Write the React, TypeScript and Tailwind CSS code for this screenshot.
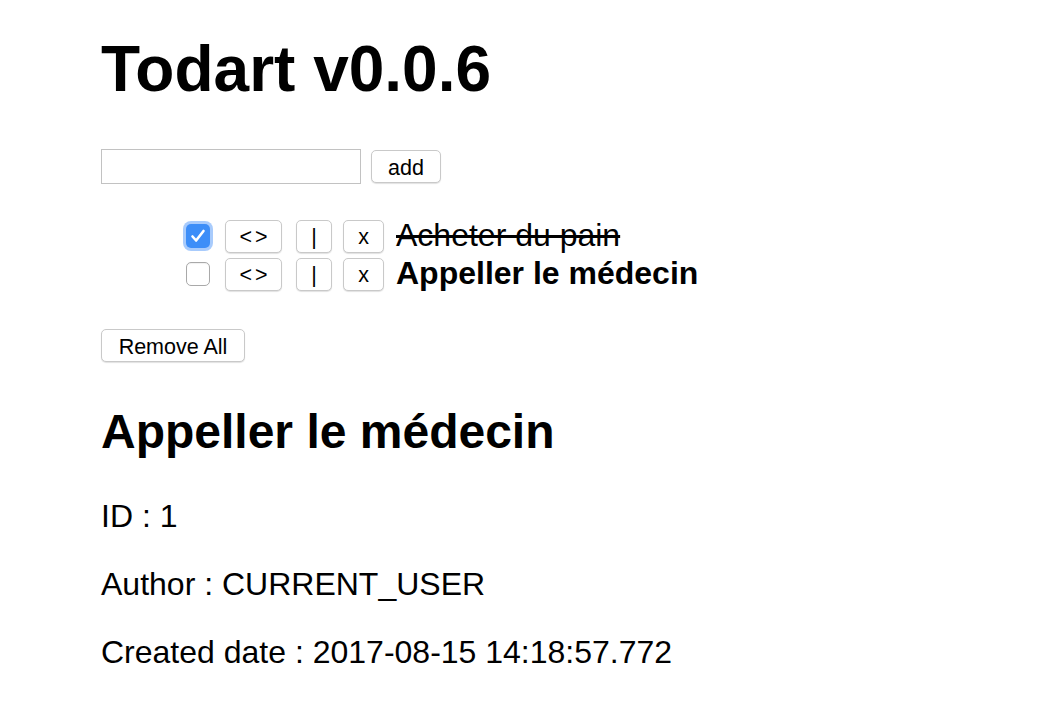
import React from "react";

type Todo = {
  id: number;
  title: string;
  done: boolean;
};

const todos: Todo[] = [
  { id: 0, title: "Acheter du pain", done: true },
  { id: 1, title: "Appeller le médecin", done: false },
];

const btn =
  "h-[33px] rounded-[5px] border border-[#c9c9c9] bg-white pt-[4px] text-[21.5px] leading-none text-black shadow-[0_1px_1px_rgba(0,0,0,0.12)]";

const Checkbox = ({ checked }: { checked: boolean }) =>
  checked ? (
    <span className="flex h-[24px] w-[24px] items-center justify-center rounded-[5px] bg-[#3d8ef8] shadow-[0_0_0_3px_rgba(96,160,250,0.55)]">
      <svg width="18" height="18" viewBox="0 0 18 18" fill="none">
        <path
          d="M3.5 9.5l3.6 4L14.5 4"
          stroke="white"
          strokeWidth="2.6"
          strokeLinecap="round"
          strokeLinejoin="round"
        />
      </svg>
    </span>
  ) : (
    <span className="block h-[24px] w-[24px] rounded-[5px] border border-[#a9a9a9] bg-white shadow-[inset_0_1px_1px_rgba(0,0,0,0.06)]" />
  );

const TodoRow = ({ todo }: { todo: Todo }) => (
  <li className="flex h-[38px] items-center">
    <Checkbox checked={todo.done} />
    <button
      type="button"
      className={`${btn} ml-[15px] w-[57px] pl-[3px] tracking-[3px]`}
    >
      &lt;&gt;
    </button>
    <button type="button" className={`${btn} ml-[14px] w-[36px]`}>
      |
    </button>
    <button type="button" className={`${btn} ml-[11px] w-[41px]`}>
      x
    </button>
    <span
      className={`ml-[12px] -mt-[2px] text-[32px] leading-[37px] ${
        todo.done ? "line-through" : "font-bold"
      }`}
    >
      {todo.title}
    </span>
  </li>
);

export default function App() {
  const selected = todos[1];

  return (
    <div
      className="min-h-[726px] bg-white pl-[101px] pt-[33px] text-black"
      style={{ fontFamily: '"Liberation Sans", Arial, Helvetica, sans-serif' }}
    >
      <h1 className="text-[64px] font-bold leading-[72px]">Todart v0.0.6</h1>

      <div className="mt-[44px] flex items-center">
        <input
          type="text"
          className="h-[35px] w-[260px] border border-[#c2c2c2] bg-white px-2 text-[21px] outline-none"
        />
        <button type="button" className={`${btn} ml-[10px] w-[70px]`}>
          add
        </button>
      </div>

      <ul className="mt-[33px] pl-[85px]">
        {todos.map((todo) => (
          <TodoRow key={todo.id} todo={todo} />
        ))}
      </ul>

      <button type="button" className={`${btn} mt-[36px] w-[144px]`}>
        Remove All
      </button>

      <h2 className="mt-[42px] text-[48px] font-bold leading-[56px]">
        {selected.title}
      </h2>

      <p className="mt-[38px] text-[32px] leading-[37px]">ID : {selected.id}</p>
      <p className="mt-[31px] text-[32px] leading-[37px]">
        Author : CURRENT_USER
      </p>
      <p className="mt-[31px] text-[32px] leading-[37px]">
        Created date : 2017-08-15 14:18:57.772
      </p>
    </div>
  );
}
